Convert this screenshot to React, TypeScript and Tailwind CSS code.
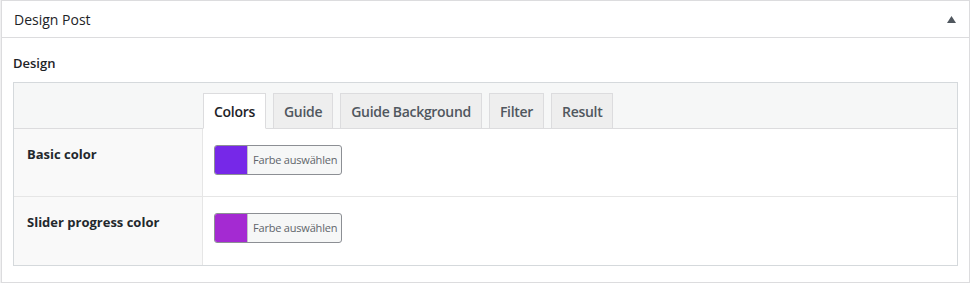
import React from "react";

const font = { fontFamily: '"Open Sans", "Noto Sans", sans-serif' };

function ColorButton({ color }: { color: string }) {
  return (
    <div className="flex h-[30px] w-[128px] overflow-hidden rounded-[3px] border border-[#8c8f94] bg-[#f6f7f7]">
      <div className="w-[32px] shrink-0" style={{ backgroundColor: color }} />
      <div className="flex items-center whitespace-nowrap border-l border-[#c3c4c7] pl-[5px] text-[11px] tracking-[-0.2px] text-[#5f656b]">
        Farbe auswählen
      </div>
    </div>
  );
}

function Row({ label, color, last }: { label: string; color: string; last?: boolean }) {
  return (
    <div className={`flex h-[68px] ${last ? "" : "border-b border-[#e6e6e6]"}`}>
      <div className="w-[189px] shrink-0 border-r border-[#e6e6e6] bg-[#f9f9f9] pl-[13px] pt-[15px] text-[13px] font-bold leading-[20px] text-[#23282d]">
        {label}
      </div>
      <div className="flex-1 bg-white pl-[11px] pt-[16px]">
        <ColorButton color={color} />
      </div>
    </div>
  );
}

export default function App() {
  const tabs = ["Colors", "Guide", "Guide Background", "Filter", "Result"];
  return (
    <div className="h-[283px] w-[970px] bg-[#f0f0f1] pl-[1px]" style={font}>
      <div className="h-[283px] w-[969px] border border-[#dcdcde] bg-white">
        <div className="flex h-[37px] items-center justify-between border-b border-[#dcdcde] pl-[12px] pr-[13px]">
          <span className="text-[14px] text-[#1d2327]">Design Post</span>
          <svg width="9" height="7" viewBox="0 0 9 7">
            <path d="M4.5 0 L9 7 L0 7 Z" fill="#50575e" />
          </svg>
        </div>
        <div className="pl-[11px] pr-[11px] pt-[15px]">
          <div className="mb-[9px] text-[13px] font-semibold leading-[20px] text-[#1d2327]">Design</div>
          <div className="border border-[#d5d9dc]">
            <div className="flex h-[46px] items-end border-b border-[#dcdcde] bg-[#f6f7f7] pl-[189px]">
              {tabs.map((t, i) => (
                <div
                  key={t}
                  className={`mr-[7px] -mb-px flex h-[36px] items-center border px-[10px] pt-[1px] text-[14px] font-semibold tracking-[-0.3px] ${
                    i === 0
                      ? "border-[#dcdcde] border-b-white bg-white text-[#1d2327]"
                      : "border-[#dcdcde] bg-[#eeeeee] text-[#50575e]"
                  }`}
                >
                  {t}
                </div>
              ))}
            </div>
            <Row label="Basic color" color="#7628e8" />
            <Row label="Slider progress color" color="#a42ad2" last />
          </div>
        </div>
      </div>
    </div>
  );
}
